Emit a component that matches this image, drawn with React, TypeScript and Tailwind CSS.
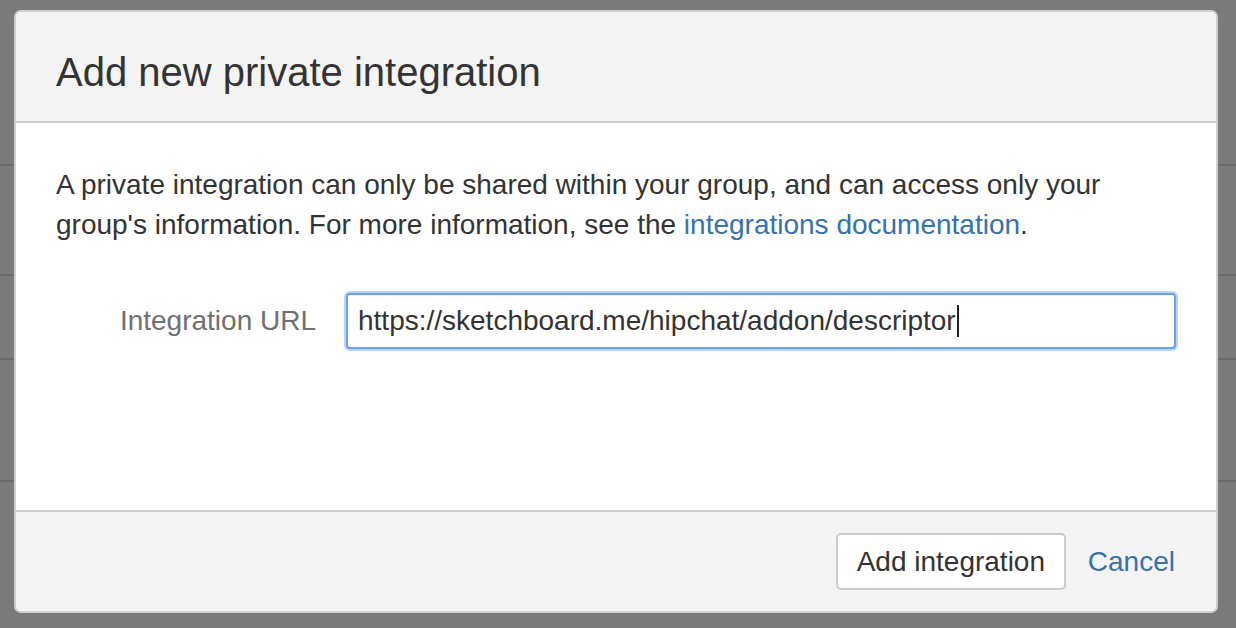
import React from 'react';

const font = { fontFamily: '"Liberation Sans", Arial, sans-serif' };

// Rows of the page behind the overlay
const bgRows = ['h-[166px]', 'h-[110px]', 'h-[84px]', 'h-[122px]', 'flex-1'];

export default function App() {
  return (
    <div className="relative w-[1236px] h-[628px] overflow-hidden bg-[#7b7b7b]" style={font}>
      {/* Page behind the dialog */}
      <div className="flex flex-col h-full">
        {bgRows.map((h, i) => (
          <div key={i} className={`${h} border-b-2 border-[#6c6c6c] last:border-b-0`} />
        ))}
      </div>

      {/* Dialog */}
      <div className="absolute left-[14px] top-[10px] w-[1204px] h-[603px] flex flex-col rounded-[7px] border-2 border-[#cfcfcf] bg-white overflow-hidden">
        <header className="h-[111px] shrink-0 flex items-center px-[40px] pt-[11px] bg-[#f4f4f4] border-b-2 border-[#cccccc]">
          <h2 className="text-[40px] leading-none text-[#333333]">Add new private integration</h2>
        </header>

        <div className="flex-1 px-[40px] pt-[42px]">
          <p className="text-[28px] leading-[40px] text-[#333333]">
            A private integration can only be shared within your group, and can access only your group's
            information. For more information, see the{' '}
            <a className="text-[#3572b0]">integrations documentation</a>.
          </p>

          <div className="mt-[48px] flex items-center">
            <label className="w-[260px] shrink-0 text-right text-[28px] text-[#707070]">Integration URL</label>
            <div className="ml-[30px] w-[830px] h-[56px] flex items-center pl-[10px] rounded-[4px] border-2 border-[#6aa3ef] bg-white shadow-[0_0_0_2px_#b8d5f8]">
              <span className="text-[28px] text-[#333333]">https://sketchboard.me/hipchat/addon/descriptor</span>
              <span className="ml-[1px] w-[2px] h-[32px] bg-[#222222]" />
            </div>
          </div>
        </div>

        <footer className="h-[101px] shrink-0 flex items-center justify-end gap-[22px] pr-[41px] bg-[#f4f4f4] border-t-2 border-[#cccccc]">
          <button
            type="button"
            className="w-[230px] h-[57px] rounded-[5px] border-2 border-[#cccccc] bg-white text-[28px] text-[#333333]"
          >
            Add integration
          </button>
          <a className="text-[28px] text-[#3572b0]">Cancel</a>
        </footer>
      </div>
    </div>
  );
}
